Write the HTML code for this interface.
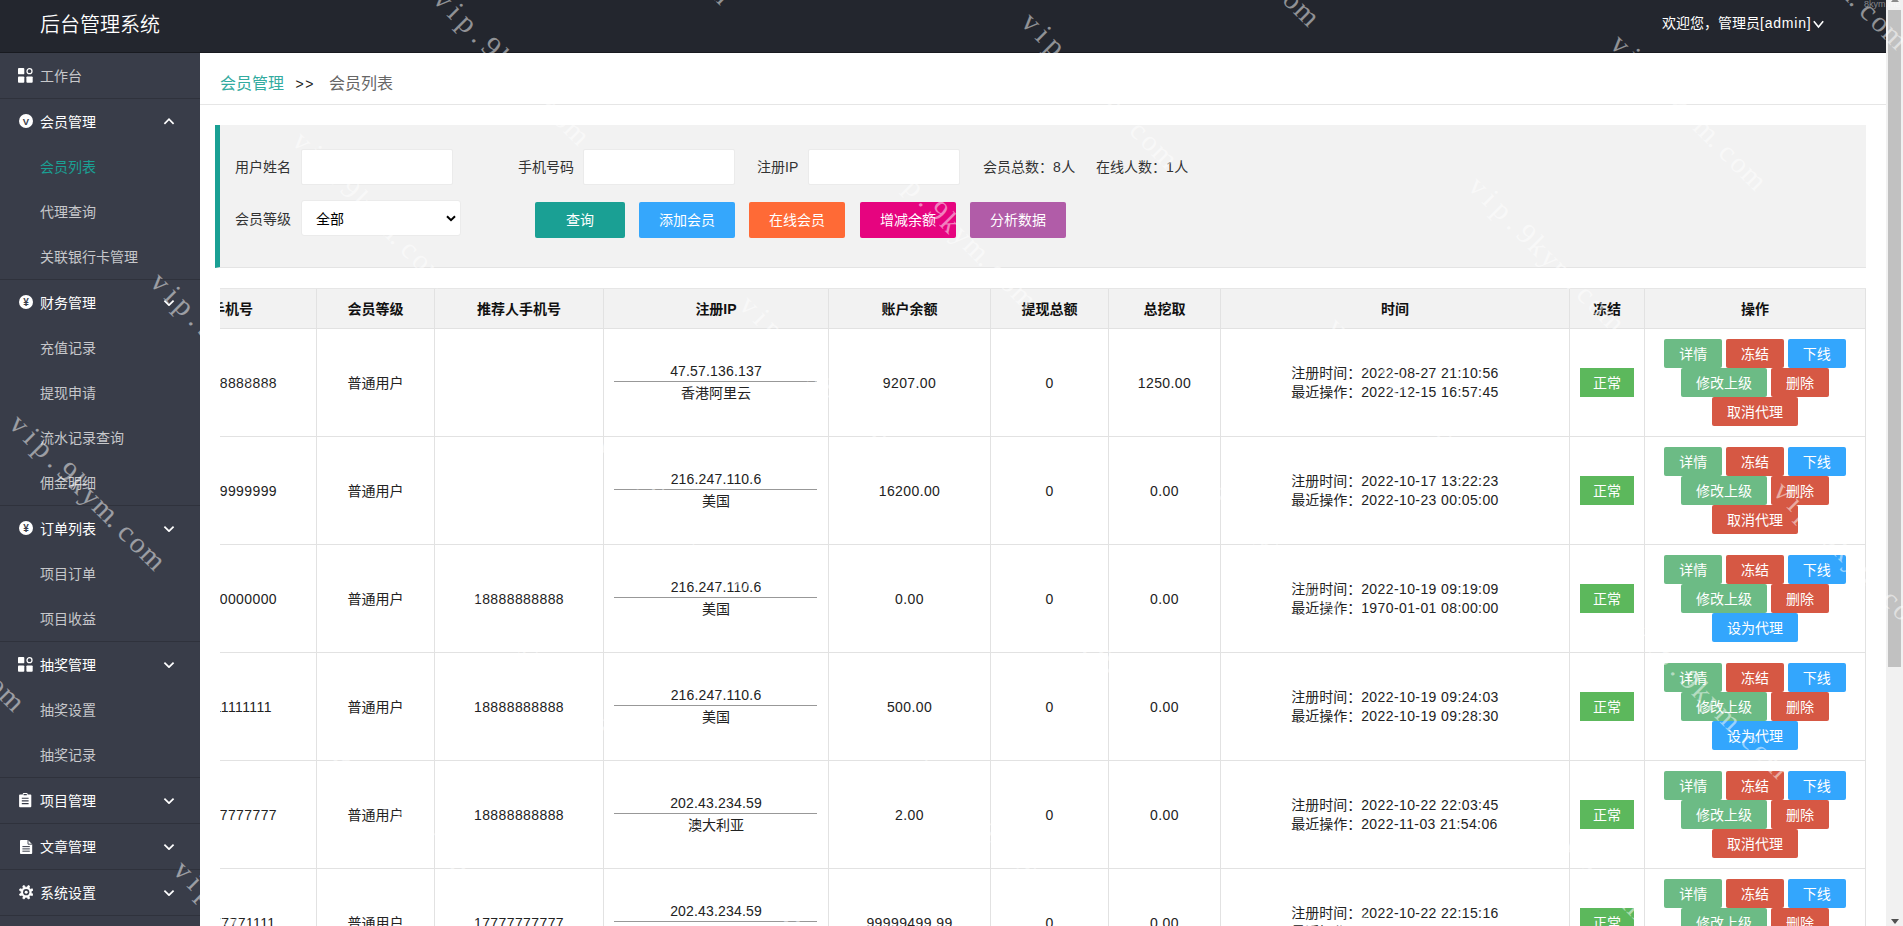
<!DOCTYPE html>
<html lang="zh-CN"><head><meta charset="utf-8"><title>后台管理系统</title>
<style>
*{box-sizing:border-box}
html,body{margin:0;padding:0}
body{width:1903px;height:926px;overflow:hidden;position:relative;background:#fff;color:#222;font:14px/1 "Liberation Sans","Noto Sans CJK SC",sans-serif}
a{text-decoration:none;color:inherit}
.n{letter-spacing:.4px}.n2{letter-spacing:.17px}
#hd{position:absolute;left:0;top:0;width:1886px;height:53px;background:#23262E;box-shadow:inset 0 -1px 0 #181a20;color:#fff;overflow:hidden}
#hd .logo{position:absolute;left:40px;top:0;height:50px;line-height:50px;font-size:20px;font-weight:350}
#hd .user{position:absolute;left:1662px;top:0;height:46px;line-height:46px;font-size:14px;white-space:nowrap}
#hd .user .n{letter-spacing:.8px}
#hd .user svg{position:absolute;left:151px;top:20px}
#side{position:absolute;left:0;top:53px;width:200px;height:873px;background:#393D49;overflow:hidden}
#side ul{list-style:none;margin:0;padding:0}
#side li.g{border-bottom:1px solid #2f323c}
#side a{display:block;position:relative;height:45px;line-height:47px;overflow:hidden;padding-left:40px;color:rgba(255,255,255,.72);font-size:14px}
#side a.p{color:#fff}
#side a.on{color:#1AA094}
#side a svg.ic{position:absolute}
#side a svg.ch{position:absolute;left:163px;top:18px}
#main{position:absolute;left:200px;top:53px;width:1686px;height:873px;background:#fff;overflow:hidden}
#crumb{position:absolute;left:0;top:0;width:1686px;height:52px;border-bottom:1px solid #e6e6e6;font-size:16px;line-height:62px;white-space:nowrap}
#crumb span{position:absolute;top:0}
#crumb .c1{left:20px;color:#33ABA0}
#crumb .c2{left:95.5px;color:#222;letter-spacing:1.6px;font-size:14px}
#crumb .c3{left:129px;color:#666}
#panel{position:absolute;left:15px;top:72px;width:1651px;height:143px;background:#f2f2f2;border-left:5px solid #1AA094;border-bottom:1px solid #e4e4e4}
#panel label{position:absolute;line-height:14px;color:#333;white-space:nowrap}
#panel .inp{position:absolute;width:152px;height:36px;background:#fff;border:1px solid #ebebeb;border-radius:2px}
#panel .sel{position:absolute;width:160px;height:36px;background:#fff;border:1px solid #ebebeb;border-radius:3px;line-height:36px;padding-left:14px;color:#000}
#panel .sel svg{position:absolute;left:144px;top:14px}
#panel .fb{position:absolute;top:77px;height:36px;line-height:36px;text-align:center;color:#fff;border-radius:2px;font-size:14px}
#tw{position:absolute;left:20px;top:235px;width:1646px;height:638px;overflow:hidden}
#tb{position:absolute;left:-73px;top:0;table-layout:fixed;width:1719px;border-collapse:separate;border-spacing:0;border-top:1px solid #e6e6e6;border-left:1px solid #e6e6e6}
#tb th,#tb td{border-right:1px solid #e2e2e2;border-bottom:1px solid #e2e2e2;text-align:center;vertical-align:middle;padding:0;white-space:nowrap}
#tb th{height:40px;background:#f2f2f2;font-weight:bold;color:#111}
#tb td{height:108px;color:#222}
#tb td.ip{line-height:19px}
#tb td.ip hr{margin:0 auto 2px;position:relative;left:-1px;width:203px;height:1px;border:0;background:#989898}
#tb td.tm div{display:inline-block;text-align:left;line-height:19px;position:relative;top:.5px}
.ok{display:inline-block;width:54px;height:29px;line-height:31px;overflow:hidden;vertical-align:middle;background:#5CB85C;color:#fff}
.b{display:inline-block;height:29px;line-height:31px;overflow:hidden;padding:0 15px;color:#fff;border-radius:2px;vertical-align:top}
#tb td.op{font-size:14px;line-height:29px;word-spacing:-0.1px}
.b.g{background:#6CBB85}.b.r{background:#D65844}.b.bl{background:#33A6FD}
#sb{position:absolute;left:1886px;top:0;width:17px;height:926px;background:#f1f1f1}
#sb .th{position:absolute;left:2px;top:10px;width:13px;height:657px;background:#c1c1c1}
#sb .up{position:absolute;left:5px;top:-3px;border:4px solid transparent;border-bottom:5px solid #8a8a8a;border-top:0;width:0;height:0}
#sb .dn{position:absolute;left:5px;top:919px;border:4px solid transparent;border-top:5px solid #505050;border-bottom:0;width:0;height:0}
#wms{position:absolute;left:0;top:0;width:1903px;height:926px;overflow:hidden;pointer-events:none}
.wm{position:absolute;font-family:"Liberation Serif",serif;font-size:29px;color:rgba(255,255,255,.5);transform-origin:0 0;transform:rotate(45deg);white-space:nowrap;line-height:1;pointer-events:none}
.tiny{position:absolute;left:1864px;top:-1px;font-size:9px;line-height:10px;color:rgba(255,255,255,.45);white-space:nowrap}
.wm b{display:inline-block;width:16.9px;text-align:center;font-weight:normal}

</style></head><body>
<div id="hd"><div class="logo">后台管理系统</div>
<div class="user">欢迎您，管理员<span class="n">[admin]</span><svg width="11" height="9" viewBox="0 0 11 9"><path d="M.8 1.2 L5.5 7 L10.2 1.2" fill="none" stroke="#fff" stroke-width="1.6"/></svg></div>
</div>

<div id="side"><ul>
<li class="g"><a><svg class="ic" style="left:18px;top:15px" width="15" height="15" viewBox="0 0 15 15"><rect x="0" y="0" width="6.3" height="6.3" rx=".9" fill="#fff"/><rect x="0" y="8.4" width="6.3" height="6.3" rx=".9" fill="#fff"/><rect x="8.4" y="8.4" width="6.3" height="6.3" rx=".9" fill="#fff"/><circle cx="11.5" cy="3.2" r="2.5" fill="none" stroke="#fff" stroke-width="1.25"/></svg>工作台</a></li>
<li class="g"><a class="p"><svg class="ic" style="left:19px;top:15px" width="14" height="14" viewBox="0 0 14 14"><circle cx="7" cy="7" r="7" fill="#fff"/><text x="7" y="10.7" text-anchor="middle" font-family="Liberation Sans,sans-serif" font-weight="bold" font-size="9.5" fill="#393D49">V</text></svg>会员管理<svg class="ch" width="12" height="8" viewBox="0 0 12 8"><path d="M1.4 6.8 L6 2.2 L10.6 6.8" fill="none" stroke="#fff" stroke-width="1.7"/></svg></a><a class="on">会员列表</a><a>代理查询</a><a>关联银行卡管理</a></li>
<li class="g"><a class="p"><svg class="ic" style="left:19px;top:14.5px" width="14" height="14" viewBox="0 0 14 14"><circle cx="7" cy="7" r="7" fill="#fff"/><text x="7" y="10.7" text-anchor="middle" font-family="Liberation Sans,sans-serif" font-weight="bold" font-size="10" fill="#393D49">¥</text></svg>财务管理<svg class="ch" width="12" height="8" viewBox="0 0 12 8"><path d="M1.4 2.6 L6 7.2 L10.6 2.6" fill="none" stroke="#fff" stroke-width="1.7"/></svg></a><a>充值记录</a><a>提现申请</a><a>流水记录查询</a><a>佣金明细</a></li>
<li class="g"><a class="p"><svg class="ic" style="left:19px;top:14.5px" width="14" height="14" viewBox="0 0 14 14"><circle cx="7" cy="7" r="7" fill="#fff"/><text x="7" y="10.7" text-anchor="middle" font-family="Liberation Sans,sans-serif" font-weight="bold" font-size="10" fill="#393D49">¥</text></svg>订单列表<svg class="ch" width="12" height="8" viewBox="0 0 12 8"><path d="M1.4 2.6 L6 7.2 L10.6 2.6" fill="none" stroke="#fff" stroke-width="1.7"/></svg></a><a>项目订单</a><a>项目收益</a></li>
<li class="g"><a class="p"><svg class="ic" style="left:18px;top:15px" width="15" height="15" viewBox="0 0 15 15"><rect x="0" y="0" width="6.3" height="6.3" rx=".9" fill="#fff"/><rect x="0" y="8.4" width="6.3" height="6.3" rx=".9" fill="#fff"/><rect x="8.4" y="8.4" width="6.3" height="6.3" rx=".9" fill="#fff"/><circle cx="11.5" cy="3.2" r="2.5" fill="none" stroke="#fff" stroke-width="1.25"/></svg>抽奖管理<svg class="ch" width="12" height="8" viewBox="0 0 12 8"><path d="M1.4 2.6 L6 7.2 L10.6 2.6" fill="none" stroke="#fff" stroke-width="1.7"/></svg></a><a>抽奖设置</a><a>抽奖记录</a></li>
<li class="g"><a class="p"><svg class="ic" style="left:19px;top:14.5px" width="13" height="15" viewBox="0 0 13 15"><path d="M1 1.4 H3.8 V.9 a.9 .9 0 0 1 .9 -.9 H7.7 a.9 .9 0 0 1 .9 .9 V1.4 H11.4 a.9 .9 0 0 1 .9 .9 V13.3 a.9 .9 0 0 1 -.9 .9 H1 a.9 .9 0 0 1 -.9 -.9 V2.3 a.9 .9 0 0 1 .9 -.9z" fill="#fff"/><path d="M4.6 1.6 H7.8 M2.8 5.2 H9.6 M2.8 7.9 H9.6 M2.8 10.6 H9.6" stroke="#393D49" stroke-width="1.1"/></svg>项目管理<svg class="ch" width="12" height="8" viewBox="0 0 12 8"><path d="M1.4 2.6 L6 7.2 L10.6 2.6" fill="none" stroke="#fff" stroke-width="1.7"/></svg></a></li>
<li class="g"><a class="p"><svg class="ic" style="left:19.5px;top:15.5px" width="13" height="15" viewBox="0 0 13 15"><path d="M.9 0 H8 L12.2 4.2 V13 a.9 .9 0 0 1 -.9 .9 H.9 a.9 .9 0 0 1 -.9 -.9 V.9 a.9 .9 0 0 1 .9 -.9z" fill="#fff"/><path d="M8 0 V4.2 H12.2" fill="none" stroke="#393D49" stroke-width=".9"/><path d="M2.4 6.6 H9.8 M2.4 8.9 H9.8 M2.4 11.2 H9.8" stroke="#393D49" stroke-width="1"/></svg>文章管理<svg class="ch" width="12" height="8" viewBox="0 0 12 8"><path d="M1.4 2.6 L6 7.2 L10.6 2.6" fill="none" stroke="#fff" stroke-width="1.7"/></svg></a></li>
<li class="g"><a class="p"><svg class="ic" style="left:18.7px;top:15.4px" width="14.4" height="14.4" viewBox="0 0 14 14"><path d="M7.77 2.16 L8.93 0.37 L10.32 0.95 L9.88 3.04 L10.96 4.12 L13.05 3.68 L13.63 5.07 L11.84 6.23 L11.84 7.77 L13.63 8.93 L13.05 10.32 L10.96 9.88 L9.88 10.96 L10.32 13.05 L8.93 13.63 L7.77 11.84 L6.23 11.84 L5.07 13.63 L3.68 13.05 L4.12 10.96 L3.04 9.88 L0.95 10.32 L0.37 8.93 L2.16 7.77 L2.16 6.23 L0.37 5.07 L0.95 3.68 L3.04 4.12 L4.12 3.04 L3.68 0.95 L5.07 0.37 L6.23 2.16Z" fill="#fff" stroke="#fff" stroke-width=".7" stroke-linejoin="round"/><circle cx="7" cy="7" r="3.05" fill="#393D49"/><circle cx="7" cy="7" r="1.45" fill="#fff"/></svg>系统设置<svg class="ch" width="12" height="8" viewBox="0 0 12 8"><path d="M1.4 2.6 L6 7.2 L10.6 2.6" fill="none" stroke="#fff" stroke-width="1.7"/></svg></a></li>
<li class="g"><a class="p"><svg class="ic" style="left:19px;top:15px" width="14" height="14" viewBox="0 0 14 14"><circle cx="7" cy="7" r="7" fill="#fff"/><text x="7" y="10.7" text-anchor="middle" font-family="Liberation Sans,sans-serif" font-weight="bold" font-size="9.5" fill="#393D49">V</text></svg>管理员管理<svg class="ch" width="12" height="8" viewBox="0 0 12 8"><path d="M1.4 2.6 L6 7.2 L10.6 2.6" fill="none" stroke="#fff" stroke-width="1.7"/></svg></a></li>
</ul></div>

<div id="main">
<div id="crumb"><span class="c1">会员管理</span><span class="c2">&gt;&gt;</span><span class="c3">会员列表</span></div>
<div id="panel">
<label style="left:15px;top:35px">用户姓名</label><span class="inp" style="left:81px;top:24px"></span>
<label style="left:298px;top:35px">手机号码</label><span class="inp" style="left:363px;top:24px"></span>
<label style="left:537px;top:35px">注册IP</label><span class="inp" style="left:588px;top:24px"></span>
<label style="left:763px;top:35px">会员总数：<span class="n">8</span>人</label>
<label style="left:876px;top:35px">在线人数：<span class="n">1</span>人</label>
<label style="left:15px;top:87px">会员等级</label>
<span class="sel" style="left:81px;top:75px">全部<svg width="10" height="7" viewBox="0 0 10 7"><path d="M1 1.2 L5 5.2 L9 1.2" fill="none" stroke="#000" stroke-width="2"/></svg></span>
<a class="fb" style="left:315px;width:90px;background:#1AA094">查询</a>
<a class="fb" style="left:419px;width:96px;background:#35A7FC">添加会员</a>
<a class="fb" style="left:529px;width:96px;background:#FF6A36">在线会员</a>
<a class="fb" style="left:640px;width:96px;background:#E6047F">增减余额</a>
<a class="fb" style="left:750px;width:96px;background:#B15CA8">分析数据</a>
</div>
<div id="tw"><table id="tb">
<colgroup><col style="width:169px"><col style="width:118px"><col style="width:169px"><col style="width:225px"><col style="width:162px"><col style="width:118px"><col style="width:112px"><col style="width:349px"><col style="width:75px"><col style="width:221px"></colgroup>
<thead><tr><th>手机号</th><th>会员等级</th><th>推荐人手机号</th><th>注册IP</th><th>账户余额</th><th>提现总额</th><th>总挖取</th><th>时间</th><th>冻结</th><th>操作</th></tr></thead>
<tbody>
<tr>
<td><span class="n">18888888888</span></td>
<td>普通用户</td>
<td><span class="n"></span></td>
<td class="ip"><span class="n2">47.57.136.137</span><hr>香港阿里云</td>
<td><span class="n">9207.00</span></td>
<td><span class="n">0</span></td>
<td><span class="n">1250.00</span></td>
<td class="tm"><div>注册时间：<span class="n">2022-08-27 21:10:56</span><br>最近操作：<span class="n">2022-12-15 16:57:45</span></div></td>
<td><span class="ok">正常</span></td>
<td class="op"><a class="b g">详情</a> <a class="b r">冻结</a> <a class="b bl">下线</a><br><a class="b g">修改上级</a> <a class="b r">删除</a><br><a class="b r">取消代理</a></td>
</tr>
<tr>
<td><span class="n">19999999999</span></td>
<td>普通用户</td>
<td><span class="n"></span></td>
<td class="ip"><span class="n2">216.247.110.6</span><hr>美国</td>
<td><span class="n">16200.00</span></td>
<td><span class="n">0</span></td>
<td><span class="n">0.00</span></td>
<td class="tm"><div>注册时间：<span class="n">2022-10-17 13:22:23</span><br>最近操作：<span class="n">2022-10-23 00:05:00</span></div></td>
<td><span class="ok">正常</span></td>
<td class="op"><a class="b g">详情</a> <a class="b r">冻结</a> <a class="b bl">下线</a><br><a class="b g">修改上级</a> <a class="b r">删除</a><br><a class="b r">取消代理</a></td>
</tr>
<tr>
<td><span class="n">10000000000</span></td>
<td>普通用户</td>
<td><span class="n">18888888888</span></td>
<td class="ip"><span class="n2">216.247.110.6</span><hr>美国</td>
<td><span class="n">0.00</span></td>
<td><span class="n">0</span></td>
<td><span class="n">0.00</span></td>
<td class="tm"><div>注册时间：<span class="n">2022-10-19 09:19:09</span><br>最近操作：<span class="n">1970-01-01 08:00:00</span></div></td>
<td><span class="ok">正常</span></td>
<td class="op"><a class="b g">详情</a> <a class="b r">冻结</a> <a class="b bl">下线</a><br><a class="b g">修改上级</a> <a class="b r">删除</a><br><a class="b bl">设为代理</a></td>
</tr>
<tr>
<td><span class="n">11111111111</span></td>
<td>普通用户</td>
<td><span class="n">18888888888</span></td>
<td class="ip"><span class="n2">216.247.110.6</span><hr>美国</td>
<td><span class="n">500.00</span></td>
<td><span class="n">0</span></td>
<td><span class="n">0.00</span></td>
<td class="tm"><div>注册时间：<span class="n">2022-10-19 09:24:03</span><br>最近操作：<span class="n">2022-10-19 09:28:30</span></div></td>
<td><span class="ok">正常</span></td>
<td class="op"><a class="b g">详情</a> <a class="b r">冻结</a> <a class="b bl">下线</a><br><a class="b g">修改上级</a> <a class="b r">删除</a><br><a class="b bl">设为代理</a></td>
</tr>
<tr>
<td><span class="n">17777777777</span></td>
<td>普通用户</td>
<td><span class="n">18888888888</span></td>
<td class="ip"><span class="n2">202.43.234.59</span><hr>澳大利亚</td>
<td><span class="n">2.00</span></td>
<td><span class="n">0</span></td>
<td><span class="n">0.00</span></td>
<td class="tm"><div>注册时间：<span class="n">2022-10-22 22:03:45</span><br>最近操作：<span class="n">2022-11-03 21:54:06</span></div></td>
<td><span class="ok">正常</span></td>
<td class="op"><a class="b g">详情</a> <a class="b r">冻结</a> <a class="b bl">下线</a><br><a class="b g">修改上级</a> <a class="b r">删除</a><br><a class="b r">取消代理</a></td>
</tr>
<tr>
<td><span class="n">17777771111</span></td>
<td>普通用户</td>
<td><span class="n">17777777777</span></td>
<td class="ip"><span class="n2">202.43.234.59</span><hr>澳大利亚</td>
<td><span class="n">99999499.99</span></td>
<td><span class="n">0</span></td>
<td><span class="n">0.00</span></td>
<td class="tm"><div>注册时间：<span class="n">2022-10-22 22:15:16</span><br>最近操作：<span class="n">2022-11-03 21:50:12</span></div></td>
<td><span class="ok">正常</span></td>
<td class="op"><a class="b g">详情</a> <a class="b r">冻结</a> <a class="b bl">下线</a><br><a class="b g">修改上级</a> <a class="b r">删除</a><br><a class="b r">取消代理</a></td>
</tr>
</tbody></table></div>
</div>
<div id="sb"><i class="up"></i><i class="th"></i><i class="dn"></i></div>
<div id="wms"><div class="wm" style="left:-139.9px;top:-39.2px"><b>v</b><b>i</b><b>p</b><b>.</b><b>9</b><b>k</b><b>y</b><b>m</b><b>.</b><b>c</b><b>o</b><b>m</b></div><div class="wm" style="left:589.6px;top:-158.2px"><b>v</b><b>i</b><b>p</b><b>.</b><b>9</b><b>k</b><b>y</b><b>m</b><b>.</b><b>c</b><b>o</b><b>m</b></div><div class="wm" style="left:448.2px;top:-16.8px"><b>v</b><b>i</b><b>p</b><b>.</b><b>9</b><b>k</b><b>y</b><b>m</b><b>.</b><b>c</b><b>o</b><b>m</b></div><div class="wm" style="left:306.8px;top:124.6px"><b>v</b><b>i</b><b>p</b><b>.</b><b>9</b><b>k</b><b>y</b><b>m</b><b>.</b><b>c</b><b>o</b><b>m</b></div><div class="wm" style="left:165.4px;top:266.1px"><b>v</b><b>i</b><b>p</b><b>.</b><b>9</b><b>k</b><b>y</b><b>m</b><b>.</b><b>c</b><b>o</b><b>m</b></div><div class="wm" style="left:23.9px;top:407.5px"><b>v</b><b>i</b><b>p</b><b>.</b><b>9</b><b>k</b><b>y</b><b>m</b><b>.</b><b>c</b><b>o</b><b>m</b></div><div class="wm" style="left:-117.5px;top:548.9px"><b>v</b><b>i</b><b>p</b><b>.</b><b>9</b><b>k</b><b>y</b><b>m</b><b>.</b><b>c</b><b>o</b><b>m</b></div><div class="wm" style="left:1177.8px;top:-135.8px"><b>v</b><b>i</b><b>p</b><b>.</b><b>9</b><b>k</b><b>y</b><b>m</b><b>.</b><b>c</b><b>o</b><b>m</b></div><div class="wm" style="left:1036.3px;top:5.7px"><b>v</b><b>i</b><b>p</b><b>.</b><b>9</b><b>k</b><b>y</b><b>m</b><b>.</b><b>c</b><b>o</b><b>m</b></div><div class="wm" style="left:894.9px;top:147.1px"><b>v</b><b>i</b><b>p</b><b>.</b><b>9</b><b>k</b><b>y</b><b>m</b><b>.</b><b>c</b><b>o</b><b>m</b></div><div class="wm" style="left:753.5px;top:288.5px"><b>v</b><b>i</b><b>p</b><b>.</b><b>9</b><b>k</b><b>y</b><b>m</b><b>.</b><b>c</b><b>o</b><b>m</b></div><div class="wm" style="left:612.1px;top:429.9px"><b>v</b><b>i</b><b>p</b><b>.</b><b>9</b><b>k</b><b>y</b><b>m</b><b>.</b><b>c</b><b>o</b><b>m</b></div><div class="wm" style="left:470.6px;top:571.3px"><b>v</b><b>i</b><b>p</b><b>.</b><b>9</b><b>k</b><b>y</b><b>m</b><b>.</b><b>c</b><b>o</b><b>m</b></div><div class="wm" style="left:329.2px;top:712.8px"><b>v</b><b>i</b><b>p</b><b>.</b><b>9</b><b>k</b><b>y</b><b>m</b><b>.</b><b>c</b><b>o</b><b>m</b></div><div class="wm" style="left:187.8px;top:854.2px"><b>v</b><b>i</b><b>p</b><b>.</b><b>9</b><b>k</b><b>y</b><b>m</b><b>.</b><b>c</b><b>o</b><b>m</b></div><div class="wm" style="left:1765.9px;top:-113.3px"><b>v</b><b>i</b><b>p</b><b>.</b><b>9</b><b>k</b><b>y</b><b>m</b><b>.</b><b>c</b><b>o</b><b>m</b></div><div class="wm" style="left:1624.5px;top:28.1px"><b>v</b><b>i</b><b>p</b><b>.</b><b>9</b><b>k</b><b>y</b><b>m</b><b>.</b><b>c</b><b>o</b><b>m</b></div><div class="wm" style="left:1483.0px;top:169.5px"><b>v</b><b>i</b><b>p</b><b>.</b><b>9</b><b>k</b><b>y</b><b>m</b><b>.</b><b>c</b><b>o</b><b>m</b></div><div class="wm" style="left:1341.6px;top:311.0px"><b>v</b><b>i</b><b>p</b><b>.</b><b>9</b><b>k</b><b>y</b><b>m</b><b>.</b><b>c</b><b>o</b><b>m</b></div><div class="wm" style="left:1200.2px;top:452.4px"><b>v</b><b>i</b><b>p</b><b>.</b><b>9</b><b>k</b><b>y</b><b>m</b><b>.</b><b>c</b><b>o</b><b>m</b></div><div class="wm" style="left:1058.8px;top:593.8px"><b>v</b><b>i</b><b>p</b><b>.</b><b>9</b><b>k</b><b>y</b><b>m</b><b>.</b><b>c</b><b>o</b><b>m</b></div><div class="wm" style="left:917.4px;top:735.2px"><b>v</b><b>i</b><b>p</b><b>.</b><b>9</b><b>k</b><b>y</b><b>m</b><b>.</b><b>c</b><b>o</b><b>m</b></div><div class="wm" style="left:775.9px;top:876.6px"><b>v</b><b>i</b><b>p</b><b>.</b><b>9</b><b>k</b><b>y</b><b>m</b><b>.</b><b>c</b><b>o</b><b>m</b></div><div class="wm" style="left:1929.8px;top:333.4px"><b>v</b><b>i</b><b>p</b><b>.</b><b>9</b><b>k</b><b>y</b><b>m</b><b>.</b><b>c</b><b>o</b><b>m</b></div><div class="wm" style="left:1788.3px;top:474.8px"><b>v</b><b>i</b><b>p</b><b>.</b><b>9</b><b>k</b><b>y</b><b>m</b><b>.</b><b>c</b><b>o</b><b>m</b></div><div class="wm" style="left:1646.9px;top:616.2px"><b>v</b><b>i</b><b>p</b><b>.</b><b>9</b><b>k</b><b>y</b><b>m</b><b>.</b><b>c</b><b>o</b><b>m</b></div><div class="wm" style="left:1505.5px;top:757.7px"><b>v</b><b>i</b><b>p</b><b>.</b><b>9</b><b>k</b><b>y</b><b>m</b><b>.</b><b>c</b><b>o</b><b>m</b></div><div class="wm" style="left:1364.1px;top:899.1px"><b>v</b><b>i</b><b>p</b><b>.</b><b>9</b><b>k</b><b>y</b><b>m</b><b>.</b><b>c</b><b>o</b><b>m</b></div><div class="tiny">8kym.me</div></div>
</body></html>
